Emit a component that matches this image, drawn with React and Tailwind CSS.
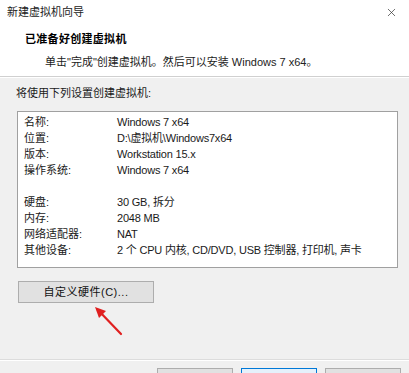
import { X } from 'lucide-react';

const general = [
  ['名称:', 'Windows 7 x64'],
  ['位置:', 'D:\\虚拟机\\Windows7x64'],
  ['版本:', 'Workstation 15.x'],
  ['操作系统:', 'Windows 7 x64'],
];

const hardware = [
  ['硬盘:', '30 GB, 拆分'],
  ['内存:', '2048 MB'],
  ['网络适配器:', 'NAT'],
  ['其他设备:', '2 个 CPU 内核, CD/DVD, USB 控制器, 打印机, 声卡'],
];

function Row({ label, value }) {
  return (
    <div className="flex h-[16px] items-center">
      <span className="w-[93px] shrink-0">{label}</span>
      <span className="whitespace-nowrap tracking-[-0.2px]">{value}</span>
    </div>
  );
}

export default function App() {
  return (
    <div className="relative flex h-[373px] w-[409px] flex-col overflow-hidden bg-[#f0f0f0] font-['Liberation_Sans','Noto_Sans_CJK_SC',sans-serif] text-[11px] text-[#1a1a1a]">
      {/* title + header */}
      <div className="h-[77px] shrink-0 border-b border-[#d0d0d0] bg-white">
        <div className="flex h-[25px] items-center justify-between pl-[7px] pr-[11px]">
          <span className="text-[11px] text-[#222]">新建虚拟机向导</span>
          <X size={13} strokeWidth={1.3} className="text-[#333]" />
        </div>
        <div className="pl-[25px] pt-[6px]">
          <div className="text-[11px] font-bold tracking-[0.3px] text-black">已准备好创建虚拟机</div>
          <div className="mt-[6px] pl-[20px] text-[11px] text-[#222]">
            单击"完成"创建虚拟机。然后可以安装 Windows 7 x64。
          </div>
        </div>
      </div>

      {/* body */}
      <div className="flex-1 border-t border-white px-[16px] pt-[7px]">
        <div className="h-[16px] leading-[16px]">将使用下列设置创建虚拟机:</div>
        <div className="ml-[1px] mt-[10px] h-[157px] w-[381px] border border-[#a0a0a0] bg-white pl-[6px] pt-[2px]">
          {general.map(([l, v]) => (
            <Row key={l} label={l} value={v} />
          ))}
          <div className="h-[16px]" />
          {hardware.map(([l, v]) => (
            <Row key={l} label={l} value={v} />
          ))}
        </div>
        <button className="ml-[2px] mt-[13px] flex h-[22px] w-[136px] items-center justify-center border border-[#adadad] bg-[#e1e1e1] text-[11px] tracking-[0.5px] text-[#111]">
          自定义硬件(C)...
        </button>
      </div>

      {/* footer */}
      <div className="h-[14px] shrink-0 border-t border-[#dcdcdc]">
        <div className="flex gap-[8px] border-t border-white pl-[157px] pt-[7px]">
          <div className="h-[23px] w-[76px] border border-[#adadad] bg-[#e1e1e1]" />
          <div className="h-[23px] w-[76px] border border-[#0078d7] bg-[#e5f1fb]" />
          <div className="h-[23px] w-[76px] border border-[#adadad] bg-[#e1e1e1]" />
        </div>
      </div>

      {/* red arrow annotation */}
      <svg className="absolute left-[90px] top-[302px]" width="40" height="36" viewBox="0 0 40 36">
        <line x1="31" y1="32" x2="8" y2="8" stroke="#e02020" strokeWidth="2.2" strokeLinecap="round" />
        <polygon points="5,5 16,9 9,16" fill="#e02020" />
      </svg>
    </div>
  );
}
